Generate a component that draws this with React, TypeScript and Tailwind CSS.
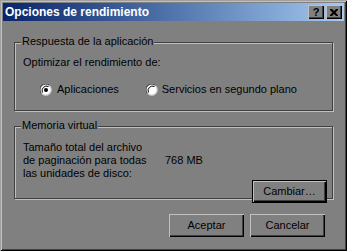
import React from "react"

const raised =
    "shadow-[inset_1px_1px_0_#c0c0c0,inset_-1px_-1px_0_#000,inset_-2px_-2px_0_#404040]"

function Radio({ checked }: { checked?: boolean }) {
    return (
        <svg width="12" height="12" viewBox="0 0 12 12" className="shrink-0">
            <circle cx="6" cy="6" r="5.5" fill="#fff" />
            <path d="M1.5 9.5 A5.5 5.5 0 0 1 9.5 1.5" stroke="#404040" strokeWidth="1" fill="none" />
            <path d="M2.5 8.5 A4.5 4.5 0 0 1 8.5 2.5" stroke="#000" strokeWidth="1" fill="none" />
            <path d="M9.5 1.5 A5.5 5.5 0 0 1 1.5 9.5" stroke="#c0c0c0" strokeWidth="1" fill="none" />
            {checked && <circle cx="6" cy="6" r="2" fill="#000" />}
        </svg>
    )
}

function GroupBox({ label, className, children }: { label: string; className?: string; children: React.ReactNode }) {
    return (
        <div className={`relative border border-[#404040] shadow-[1px_1px_0_#c0c0c0,inset_1px_1px_0_#c0c0c0] ${className ?? ""}`}>
            <span className="absolute left-[6px] top-[-8px] bg-[#808080] px-[1px] leading-[13px]">{label}</span>
            {children}
        </div>
    )
}

function Btn({ children, isDefault }: { children: React.ReactNode; isDefault?: boolean }) {
    return (
        <div
            className={`flex h-[23px] w-[75px] items-center justify-center bg-[#808080] ${
                isDefault ? "border border-black" : ""
            } ${raised}`}
        >
            {children}
        </div>
    )
}

export default function App() {
    return (
        <div
            className="flex h-[251px] w-[347px] flex-col bg-[#808080] p-[3px] text-[11px] leading-[13px] text-black shadow-[inset_1px_1px_0_#a0a0a0,inset_-1px_-1px_0_#000,inset_2px_2px_0_#c0c0c0,inset_-2px_-2px_0_#404040]"
            style={{ fontFamily: '"Liberation Sans", Arial, sans-serif' }}
        >
            {/* Title bar */}
            <div className="flex h-[18px] items-center bg-gradient-to-r from-[#0a246a] to-[#a6caf0] pl-[2px] pr-[2px]">
                <span className="flex-1 text-[12px] font-bold text-white">Opciones de rendimiento</span>
                <div className="flex gap-[2px]">
                    <div className={`flex h-[14px] w-[16px] items-center justify-center bg-[#808080] text-[11px] font-bold leading-none ${raised}`}>
                        ?
                    </div>
                    <div className={`flex h-[14px] w-[16px] items-center justify-center bg-[#808080] ${raised}`}>
                        <svg width="8" height="7" viewBox="0 0 8 7">
                            <path d="M0 0h2l2 2 2-2h2v1l-2.5 2.5L8 6v1H6L4 5 2 7H0V6l2.5-2.5L0 1z" fill="#000" />
                        </svg>
                    </div>
                </div>
            </div>

            <div className="flex flex-1 flex-col px-[11px] pt-[21px]">
                <GroupBox label="Respuesta de la aplicación" className="h-[69px] w-[319px]">
                    <div className="pl-[8px] pt-[13px]">Optimizar el rendimiento de:</div>
                    <div className="mt-[14px] flex items-center pl-[25px]">
                        <Radio checked />
                        <span className="ml-[5px]">Aplicaciones</span>
                        <span className="ml-[27px]">
                            <Radio />
                        </span>
                        <span className="ml-[4px]">Servicios en segundo plano</span>
                    </div>
                </GroupBox>

                <GroupBox label="Memoria virtual" className="mt-[15px] flex h-[73px] w-[319px] flex-col">
                    <div className="flex pl-[8px] pt-[14px]">
                        <div className="w-[142px]">
                            Tamaño total del archivo
                            <br />
                            de paginación para todas
                            <br />
                            las unidades de disco:
                        </div>
                        <div className="pt-[13px]">768 MB</div>
                    </div>
                    <div className="mt-auto flex justify-end pb-[3px] pr-[5px]">
                        <Btn isDefault>Cambiar…</Btn>
                    </div>
                </GroupBox>

                <div className="mt-[15px] flex justify-end gap-[6px] pr-[8px]">
                    <Btn>Aceptar</Btn>
                    <Btn>Cancelar</Btn>
                </div>
            </div>
        </div>
    )
}
